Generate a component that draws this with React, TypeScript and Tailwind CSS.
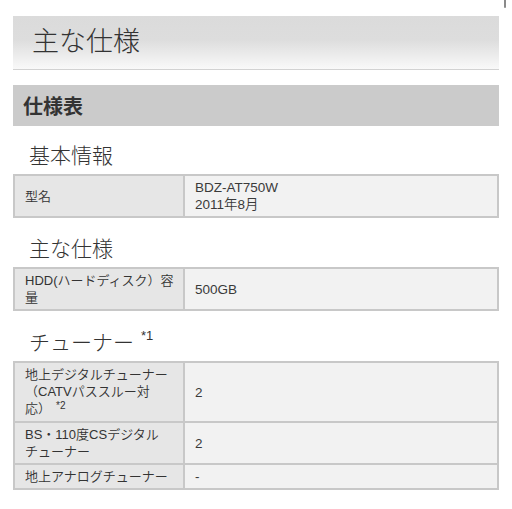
import React from "react";

const FONT = "font-['Liberation_Sans','Noto_Sans_CJK_JP',sans-serif]";

function Row({
  left,
  right,
  first,
}: {
  left: React.ReactNode;
  right: React.ReactNode;
  first?: boolean;
}) {
  return (
    <div className={`flex ${first ? "" : "border-t-2 border-[#c8c8c8]"}`}>
      <div className="w-[170px] shrink-0 border-r-2 border-[#c8c8c8] bg-[#e6e6e6] pl-[10px] pr-[4px] py-[3px] flex items-center">
        <div className="text-[13px] leading-[17px] font-[350] text-[#333] whitespace-nowrap">{left}</div>
      </div>
      <div className="flex-1 bg-[#f2f2f2] pl-[10px] py-[3px] flex items-center">
        <div className="text-[13.5px] leading-[17px] font-[350] text-[#3a3a3a] whitespace-nowrap">{right}</div>
      </div>
    </div>
  );
}

function Table({ children }: { children: React.ReactNode }) {
  return <div className="border-2 border-[#c8c8c8]">{children}</div>;
}

function Heading({ children, mt }: { children: React.ReactNode; mt: string }) {
  return (
    <div className={`${mt} h-[36px] flex items-center pl-[16px] text-[21px] font-light text-[#333]`}>
      {children}
    </div>
  );
}

export default function App() {
  return (
    <div className={`relative w-[512px] h-[509px] bg-white overflow-hidden ${FONT}`}>
      {/* scroll indicator */}
      <div className="absolute right-[6px] top-0 w-[2.5px] h-[8px] rounded-b-full bg-[#8a8a8a]" />

      <div className="px-[13px] pt-[16px]">
        {/* Title banner */}
        <div className="h-[54px] border-b border-[#d2d2d2] bg-[linear-gradient(to_bottom,#dbdbdb_0%,#dddddd_45%,#f9f9f9_100%)] flex items-center pl-[19px]">
          <span className="text-[27px] font-light text-[#333] leading-none">主な仕様</span>
        </div>

        {/* Section bar */}
        <div className="mt-[15px] h-[41px] bg-[#cbcbcb] flex items-center pl-[10px] pt-[2px]">
          <span className="text-[20px] font-bold text-[#333] leading-none">仕様表</span>
        </div>

        <Heading mt="mt-[12px]">基本情報</Heading>
        <Table>
          <Row
            first
            left="型名"
            right={
              <>
                BDZ-AT750W
                <br />
                2011年8月
              </>
            }
          />
        </Table>

        <Heading mt="mt-[13px]">主な仕様</Heading>
        <Table>
          <Row
            first
            left={
              <>
                HDD(ハードディスク）容
                <br />量
              </>
            }
            right="500GB"
          />
        </Table>

        <Heading mt="mt-[14px]">
          <span>チューナー</span>
          <span className="relative -top-[7px] ml-[7px] text-[13px]">*1</span>
        </Heading>
        <Table>
          <Row
            first
            left={
              <>
                地上デジタルチューナー
                <br />
                （CATVパススルー対
                <br />
                応）
                <span className="relative -top-[4px] ml-[5px] text-[10px]">*2</span>
              </>
            }
            right="2"
          />
          <Row
            left={
              <>
                BS・110度CSデジタル
                <br />
                チューナー
              </>
            }
            right="2"
          />
          <Row left="地上アナログチューナー" right="-" />
        </Table>
      </div>
    </div>
  );
}
